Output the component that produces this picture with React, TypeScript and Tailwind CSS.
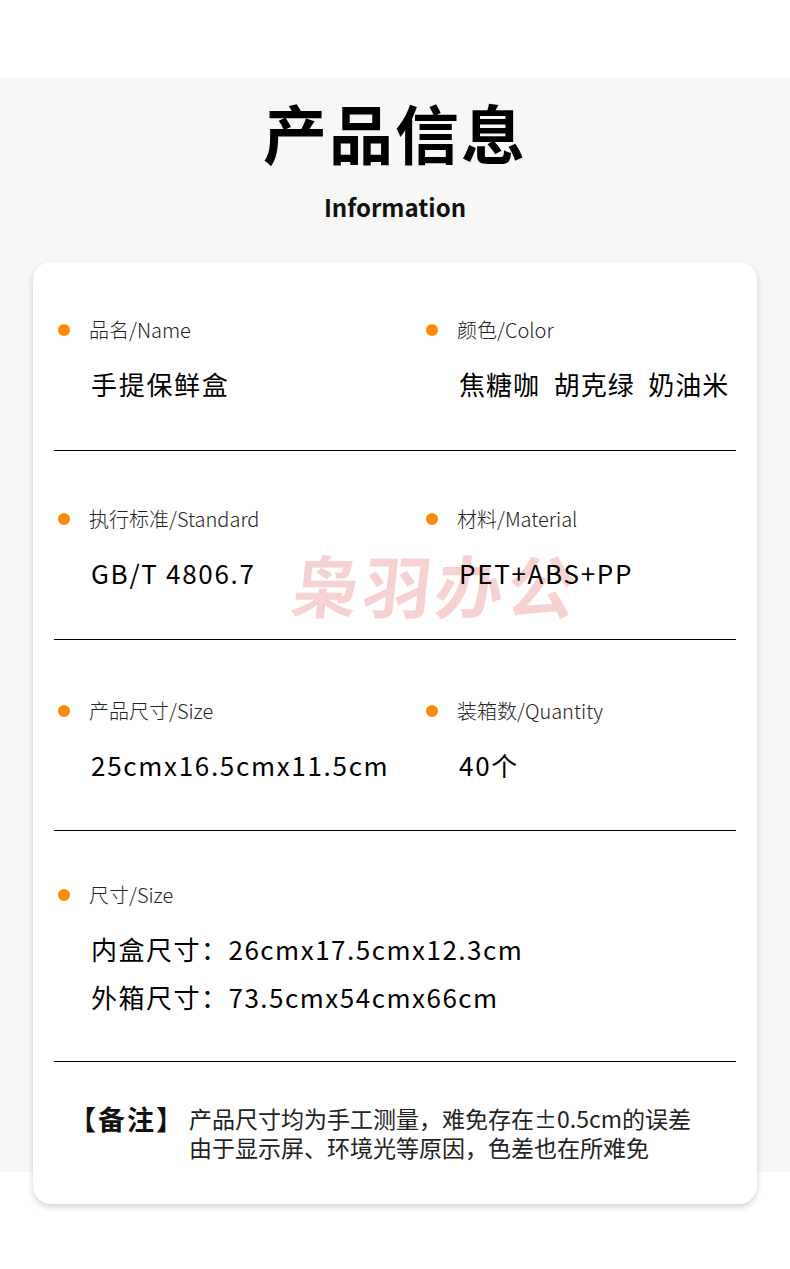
import React from "react";

const font = { fontFamily: '"Noto Sans CJK SC", "Noto Sans", sans-serif' };

type Item = { label: string; value: React.ReactNode };

const Dot = () => <span className="mt-[8px] h-[12px] w-[12px] shrink-0 rounded-full bg-[#fb8c0a]" />;

const Field = ({ label, value }: Item) => (
  <div className="pl-[4px]">
    <div className="flex items-start gap-[19px]">
      <Dot />
      <span className="text-[20px] leading-[28px] font-light text-[#222]">{label}</span>
    </div>
    <div className="mt-[23px] pl-[33px] text-[26px] leading-[34px] tracking-[1.7px] text-black">
      {value}
    </div>
  </div>
);

const rows: [Item, Item][] = [
  [
    { label: "品名/Name", value: "手提保鲜盒" },
    {
      label: "颜色/Color",
      value: <span className="whitespace-pre tracking-[1px]">焦糖咖  胡克绿  奶油米</span>,
    },
  ],
  [
    { label: "执行标准/Standard", value: "GB/T 4806.7" },
    { label: "材料/Material", value: "PET+ABS+PP" },
  ],
  [
    { label: "产品尺寸/Size", value: "25cmx16.5cmx11.5cm" },
    { label: "装箱数/Quantity", value: "40个" },
  ],
];

const App = () => {
  return (
    <div className="min-h-[1269px] w-[790px] bg-white" style={font}>
      <div className="h-[78px]" />
      <div className="flow-root bg-[#f7f7f5] pt-[21px]">
        <h1 className="text-center text-[64px] leading-[64px] font-bold tracking-[2px] text-black">产品信息</h1>
        <p className="mt-[29px] text-center text-[24px] leading-[30px] font-bold text-[#111]">Information</p>

        <div className="relative mx-[33px] mt-[40px] -mb-[32px] rounded-[18px] bg-white px-[21px] shadow-[0_3px_6px_rgba(0,0,0,0.18)]">
          {/* watermark, sits under the text */}
          <div className="pointer-events-none absolute left-[259px] top-[282px] -skew-x-6 select-none text-[68px] leading-[80px] font-bold tracking-[4px] text-[#f6d2d2]">
            枭羽办公
          </div>

          {rows.map(([a, b], i) => (
            <div
              key={i}
              className={`relative grid grid-cols-[368px_1fr] border-b border-black ${
                i === 2 ? "pt-[57px] pb-[48px]" : "pt-[54px] pb-[49px]"
              }`}
            >
              <Field {...a} />
              <Field {...b} />
            </div>
          ))}

          <div className="relative border-b border-black pt-[50px] pb-[40px] pl-[4px]">
            <div className="flex items-start gap-[19px]">
              <Dot />
              <span className="text-[20px] leading-[28px] font-light text-[#222]">尺寸/Size</span>
            </div>
            <div className="mt-[16px] pl-[33px] text-[26px] leading-[48px] tracking-[1.5px] text-black">
              <div>内盒尺寸：26cmx17.5cmx12.3cm</div>
              <div>外箱尺寸：73.5cmx54cmx66cm</div>
            </div>
          </div>

          <div className="relative flex items-start pt-[42px] pb-[42px]">
            <span className="w-[135px] shrink-0 pl-[15px] text-[27px] leading-[29px] font-bold tracking-[2px] text-[#111]">
              【备注】
            </span>
            <div className="text-[23px] leading-[29px] text-[#222]">
              <div>产品尺寸均为手工测量，难免存在±0.5cm的误差</div>
              <div>由于显示屏、环境光等原因，色差也在所难免</div>
            </div>
          </div>
        </div>
      </div>
      <div className="h-[32px]" />
    </div>
  );
};

export default App;
